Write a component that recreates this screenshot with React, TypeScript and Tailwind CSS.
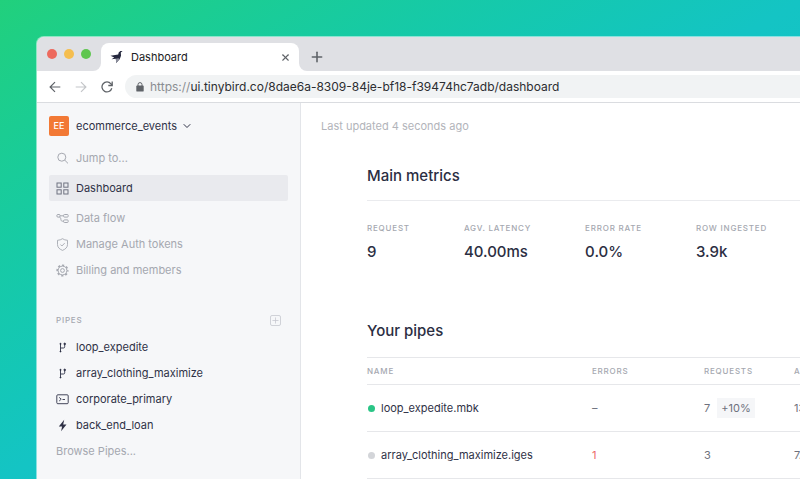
import React from 'react';
import { Plus, X, ChevronDown } from 'lucide-react';

const metrics = [
  { label: 'Request', value: '9' },
  { label: 'Agv. latency', value: '40.00ms' },
  { label: 'Error rate', value: '0.0%' },
  { label: 'Row ingested', value: '3.9k' },
];

const pipes = [
  { name: 'loop_expedite.mbk', active: true, errors: 0, requests: 7, change: '+10%', latency: '13.20ms' },
  { name: 'array_clothing_maximize.iges', active: false, errors: 1, requests: 3, change: '', latency: '7.10ms' },
];

const BirdIcon = () => (
  <svg width="14" height="14" viewBox="0 0 14 14" fill="#25283d">
    <path d="M12.6.9 10.4 1 8.7 2.500 8.200 4.400.5 5.700l3.700 1.700-2.600 1.800 4.200-.4L6.200 13l3.600-4 1.200-3.200-.2-3.400z" />
    <path d="m6.200 13-.4-4.200 2.600-.6 1.400.8z" fill="#8b8d9b" />
  </svg>
);

const ArrowIcon = ({ flip = false }: { flip?: boolean }) => (
  <svg width="12" height="12" viewBox="0 0 12 12" fill="none" stroke="currentColor" strokeWidth="1.2" className={flip ? 'rotate-180' : ''}>
    <path d="M11.3 6H1.2M6 1.1 1.1 6 6 10.9" />
  </svg>
);

const ReloadIcon = () => (
  <svg width="12" height="12" viewBox="0 0 12 12" fill="none" stroke="currentColor" strokeWidth="1.3">
    <path d="M10.8 7.3A5 5 0 1 1 9.9 2.8L11 4" />
    <path d="M11.2.6v3.9H7.3" />
  </svg>
);

const LockIcon = () => (
  <svg width="8" height="10" viewBox="0 0 8 10">
    <rect x="0.3" y="3.6" width="7.4" height="6" rx="0.9" fill="#5f6368" />
    <path d="M2 4V2.6a2 2 0 0 1 4 0V4" fill="none" stroke="#5f6368" strokeWidth="1" />
  </svg>
);

const SearchIcon = () => (
  <svg width="13" height="13" viewBox="0 0 13 13" fill="none" stroke="currentColor" strokeWidth="1">
    <circle cx="5.8" cy="5.2" r="4" />
    <path d="m8.700 8.100 3.300 3.300" />
  </svg>
);

const GridIcon = () => (
  <svg width="13" height="13" viewBox="0 0 13 13" fill="none" stroke="#6f7280" strokeWidth="1">
    <rect x="1" y="1" width="4.2" height="4.2" />
    <rect x="7.8" y="1" width="4.2" height="4.2" />
    <rect x="1" y="7.8" width="4.2" height="4.2" />
    <rect x="7.8" y="7.8" width="4.2" height="4.2" />
  </svg>
);

const FlowIcon = () => (
  <svg width="13" height="13" viewBox="0 0 13 13" fill="none" stroke="currentColor" strokeWidth="1">
    <rect x="0.8" y="2.5" width="3.4" height="2.6" rx="1.200" />
    <rect x="7.6" y="2.5" width="4.600" height="2.600" rx="0.900" />
    <rect x="7.6" y="7.9" width="4.600" height="2.600" rx="0.900" />
    <path d="M4.200 3.800h3.400M3.400 5.100c1 .2 1.300.8 1.400 1.700l.1.800c.1 1 .6 1.600 1.500 1.600h1.200" />
  </svg>
);

const ShieldIcon = () => (
  <svg width="13" height="13" viewBox="0 0 13 13" fill="none" stroke="currentColor" strokeWidth="0.9">
    <path d="M6.5.7c1.4 1 3 1.5 5 1.6v4.2c0 2.700-1.800 4.600-5 5.900-3.200-1.300-5-3.200-5-5.900V2.300c2-.1 3.600-.6 5-1.600z" />
    <path d="m4.400 6.500 1.500 1.500 2.800-2.900" />
  </svg>
);

const GearIcon = () => (
  <svg width="13" height="13" viewBox="0 0 13 13" fill="none" stroke="currentColor" strokeWidth="1">
    <circle cx="6.5" cy="6.5" r="5.300" strokeWidth="1.600" strokeDasharray="2.160 2.003" strokeDashoffset="1.080" />
    <circle cx="6.5" cy="6.5" r="4.400" />
    <circle cx="6.5" cy="6.5" r="1.900" />
  </svg>
);

const BranchIcon = () => (
  <svg width="13" height="13" viewBox="0 0 13 13" fill="none" stroke="currentColor" strokeWidth="0.900">
    <path d="M4.500 2.500v8.500M4.500 7h3c.8 0 1.200-.4 1.200-1.200V3" />
    <circle cx="4.500" cy="2.900" r="0.600" fill="currentColor" />
    <circle cx="8.700" cy="2.900" r="0.800" fill="currentColor" />
    <circle cx="4.500" cy="10.500" r="0.500" fill="currentColor" />
  </svg>
);

const TerminalIcon = () => (
  <svg width="13" height="13" viewBox="0 0 13 13" fill="none" stroke="currentColor" strokeWidth="0.900">
    <rect x="0.800" y="1.800" width="11.400" height="8.900" rx="1" />
    <path d="m3.200 4.400 2 1.800-2 1.800M6.500 6.500h2.500" />
  </svg>
);

const BoltIcon = () => (
  <svg width="13" height="13" viewBox="0 0 13 13" fill="currentColor">
    <path d="M8.200.7 2.800 7.500h3.300L5.100 12.300l5.400-6.900H7.200z" />
  </svg>
);

const navItems = [
  { label: 'Data flow', icon: <FlowIcon /> },
  { label: 'Manage Auth tokens', icon: <ShieldIcon /> },
  { label: 'Billing and members', icon: <GearIcon /> },
];

const pipeLinks = [
  { label: 'loop_expedite', icon: <BranchIcon /> },
  { label: 'array_clothing_maximize', icon: <BranchIcon /> },
  { label: 'corporate_primary', icon: <TerminalIcon /> },
  { label: 'back_end_loan', icon: <BoltIcon /> },
];

const BrowserChrome = () => (
  <header>
    <div className="flex h-[34px] bg-white">
      <div className="flex w-16 shrink-0 items-center gap-[7px] rounded-br-lg bg-[#dfe0e4] pl-[10px]">
        <span className="size-[10px] rounded-full bg-[#ed6a5e]" />
        <span className="size-[10px] rounded-full bg-[#f5be4f]" />
        <span className="size-[10px] rounded-full bg-[#5fc650]" />
      </div>
      <div className="w-[198px] shrink-0 bg-[#dfe0e4] pt-[6px]">
        <div className="flex h-full items-center rounded-t-lg bg-white pr-2 pl-[9px]">
          <BirdIcon />
          <span className="ml-[7px] flex-1 text-[11px] text-[#202124]">Dashboard</span>
          <button aria-label="Close tab" className="text-[#5f6368]">
            <X size={11} strokeWidth={2.4} />
          </button>
        </div>
      </div>
      <div className="flex flex-1 items-center rounded-bl-lg bg-[#dfe0e4] pt-[6px] pl-[10px]">
        <button aria-label="New tab" className="text-[#5f6368]">
          <Plus size={16} strokeWidth={2.4} />
        </button>
      </div>
    </div>
    <div className="flex h-8 items-center border-b border-[#dadce0] bg-white pl-3 text-[#5f6368]">
      <button aria-label="Back"><ArrowIcon /></button>
      <button aria-label="Forward" className="ml-[14px] text-[#c4c6c9]"><ArrowIcon flip /></button>
      <button aria-label="Reload" className="ml-[14px]"><ReloadIcon /></button>
      <label className="ml-3 flex h-[23px] flex-1 items-center rounded-l-full bg-[#f1f3f4] pl-[11px] text-[12px]">
        <LockIcon />
        <span className="ml-[6px] text-[#8a8d91]">https://</span>
        <input
          aria-label="Address"
          className="min-w-0 flex-1 bg-transparent text-[#2c2d31] outline-none"
          defaultValue="ui.tinybird.co/8dae6a-8309-84je-bf18-f39474hc7adb/dashboard"
        />
      </label>
    </div>
  </header>
);

const Sidebar = () => (
  <aside className="w-[264px] shrink-0 border-r border-[#e3e5e9] bg-[#f6f7f9] px-3 pt-3 text-[11px] text-[#a5a8b0]">
    <button className="flex h-[22px] items-center text-[#2f3247]">
      <span className="mr-[7px] flex size-5 items-center justify-center rounded-xs bg-[#f27935] text-[9px] font-medium text-white">EE</span>
      ecommerce_events
      <ChevronDown size={12} strokeWidth={2} className="ml-1" />
    </button>
    <label className="mt-2 flex h-[26px] items-center gap-[7px] px-[7px]">
      <SearchIcon />
      <input aria-label="Jump to" placeholder="Jump to..." className="min-w-0 flex-1 bg-transparent outline-none placeholder:text-[#a5a8b0]" />
    </label>
    <nav>
      <a href="#dashboard" className="my-1 flex h-[26px] items-center gap-[7px] rounded-xs bg-[#e9eaee] px-[7px] text-[#2f3247]">
        <GridIcon />
        Dashboard
      </a>
      {navItems.map(item => (
        <a key={item.label} href="#nav" className="flex h-[26px] items-center gap-[7px] px-[7px]">
          {item.icon}
          {item.label}
        </a>
      ))}
    </nav>
    <div className="mt-6 mb-px flex h-[26px] items-center justify-between px-[7px]">
      <h2 className="text-[8px] font-medium tracking-widest uppercase">Pipes</h2>
      <button aria-label="Add pipe" className="flex size-[11px] items-center justify-center rounded-xs border border-[#d0d2d8] text-[#c4c6cd]">
        <Plus size={9} strokeWidth={2} />
      </button>
    </div>
    <nav className="text-[#2f3247]">
      {pipeLinks.map(item => (
        <a key={item.label} href="#pipe" className="flex h-[26px] items-center gap-[7px] px-[7px]">
          {item.icon}
          {item.label}
        </a>
      ))}
      <a href="#pipes" className="flex h-[26px] items-center px-[7px] text-[#a5a8b0]">Browse Pipes...</a>
    </nav>
  </aside>
);

const App: React.FC = () => {
  return (
    <div className="h-screen overflow-hidden bg-linear-to-br from-[#21d07c] via-[#14c4c4] via-50% to-[#12bfd0] pt-9 pl-9 font-['Inter',sans-serif]">
      <div className="flex h-full flex-col overflow-hidden rounded-tl-lg border-t border-l border-white/50">
        <BrowserChrome />
        <div className="flex min-h-0 flex-1">
          <Sidebar />
          <main className="min-w-0 flex-1 overflow-hidden bg-white pt-3 pl-5 text-[#2b2e42]">
            <p className="text-[11px] leading-[22px] text-[#b2b4ba]">Last updated 4 seconds ago</p>
            <div className="pl-[46px]">
              <section>
                <h1 className="mt-[27px] text-[15px] leading-6 font-medium">Main metrics</h1>
                <dl className="mt-3 flex gap-[54px] border-t border-[#eaebee] pt-[21px]">
                  {metrics.map(metric => (
                    <div key={metric.label} className="shrink-0">
                      <dt className="text-[8px] leading-3 font-medium tracking-widest text-[#a5a8b0] uppercase">{metric.label}</dt>
                      <dd className="mt-[6px] text-[15px] leading-6 font-medium">{metric.value}</dd>
                    </div>
                  ))}
                </dl>
              </section>
              <section className="mt-[55px]">
                <h2 className="text-[15px] leading-6 font-medium">Your pipes</h2>
                <table className="mt-[14px] w-[600px] table-fixed text-left text-[11px]">
                  <thead>
                    <tr className="h-[27px] border-y border-[#e6e7ea] text-[8px] tracking-widest text-[#a5a8b0] uppercase">
                      <th className="w-[225px] font-medium">Name</th>
                      <th className="w-[112px] font-medium">Errors</th>
                      <th className="w-[90px] font-medium">Requests</th>
                      <th className="font-medium">Avg. latency</th>
                    </tr>
                  </thead>
                  <tbody>
                    {pipes.map(pipe => (
                      <tr key={pipe.name} className="h-[47px] border-b border-[#e6e7ea] text-[#6e717d]">
                        <td>
                          <span className="flex items-center gap-[6px] pl-px text-[#2f3247]">
                            <span className={`size-[7px] rounded-full ${pipe.active ? 'bg-[#2ac586]' : 'bg-[#d3d5d9]'}`} />
                            {pipe.name}
                          </span>
                        </td>
                        <td className={pipe.errors ? 'text-[#ec6a6a]' : ''}>{pipe.errors || '–'}</td>
                        <td>
                          {pipe.requests}
                          {pipe.change && <span className="ml-[7px] inline-block bg-[#f5f6f8] px-1 leading-5">{pipe.change}</span>}
                        </td>
                        <td>{pipe.latency}</td>
                      </tr>
                    ))}
                  </tbody>
                </table>
              </section>
            </div>
          </main>
        </div>
      </div>
    </div>
  );
};

export default App;
